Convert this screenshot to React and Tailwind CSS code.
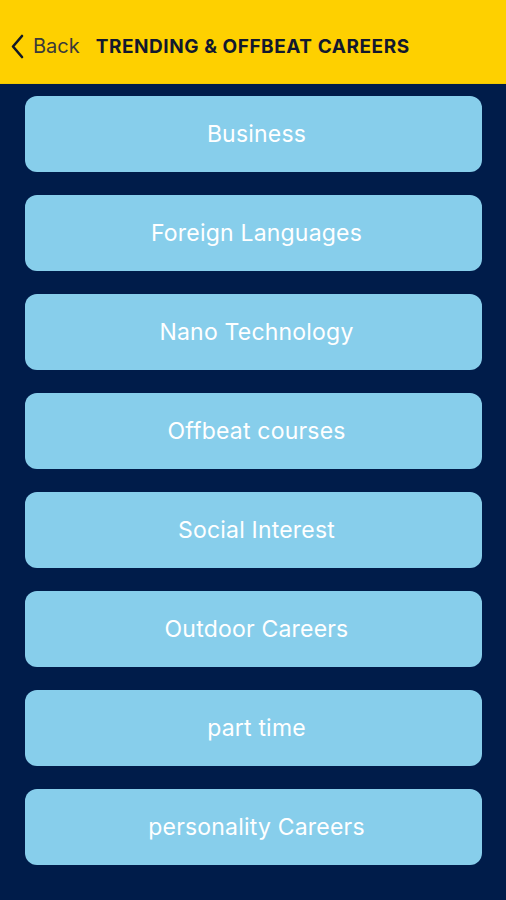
import React from 'react';

const items = [
    'Business',
    'Foreign Languages',
    'Nano Technology',
    'Offbeat courses',
    'Social Interest',
    'Outdoor Careers',
    'part time',
    'personality Careers',
];

const App = () => {
    return (
        <div className="w-[506px] h-[900px] bg-[#001c4a] overflow-hidden" style={{ fontFamily: 'Inter, "Liberation Sans", sans-serif' }}>
            {/* Header */}
            <div className="h-[84px] bg-[#fed000] flex items-end pb-[22px] border-b border-[#f2c900]">
                <button className="flex items-center ml-[10px]">
                    <svg width="14" height="25" viewBox="0 0 14 25" fill="none">
                        <path d="M12 2 L3 12.5 L12 23" stroke="#111827" strokeWidth="2.6" strokeLinecap="round" strokeLinejoin="round" />
                    </svg>
                    <span className="ml-[9px] text-[20px] text-[#3a3a3a]">Back</span>
                </button>
                <h1 className="ml-[16px] text-[19px] font-bold text-[#12182e] tracking-[0.55px]">TRENDING &amp; OFFBEAT CAREERS</h1>
            </div>
            {/* List */}
            <div className="flex flex-col gap-[23px] pl-[25px] pt-[12px]">
                {items.map((item) => (
                    <div key={item} className="w-[457px] h-[76px] rounded-[12px] bg-[#87ceeb] flex items-center justify-center pl-[6px]">
                        <span className="text-white text-[23px] tracking-[0.2px]">{item}</span>
                    </div>
                ))}
            </div>
        </div>
    );
};

export default App;
